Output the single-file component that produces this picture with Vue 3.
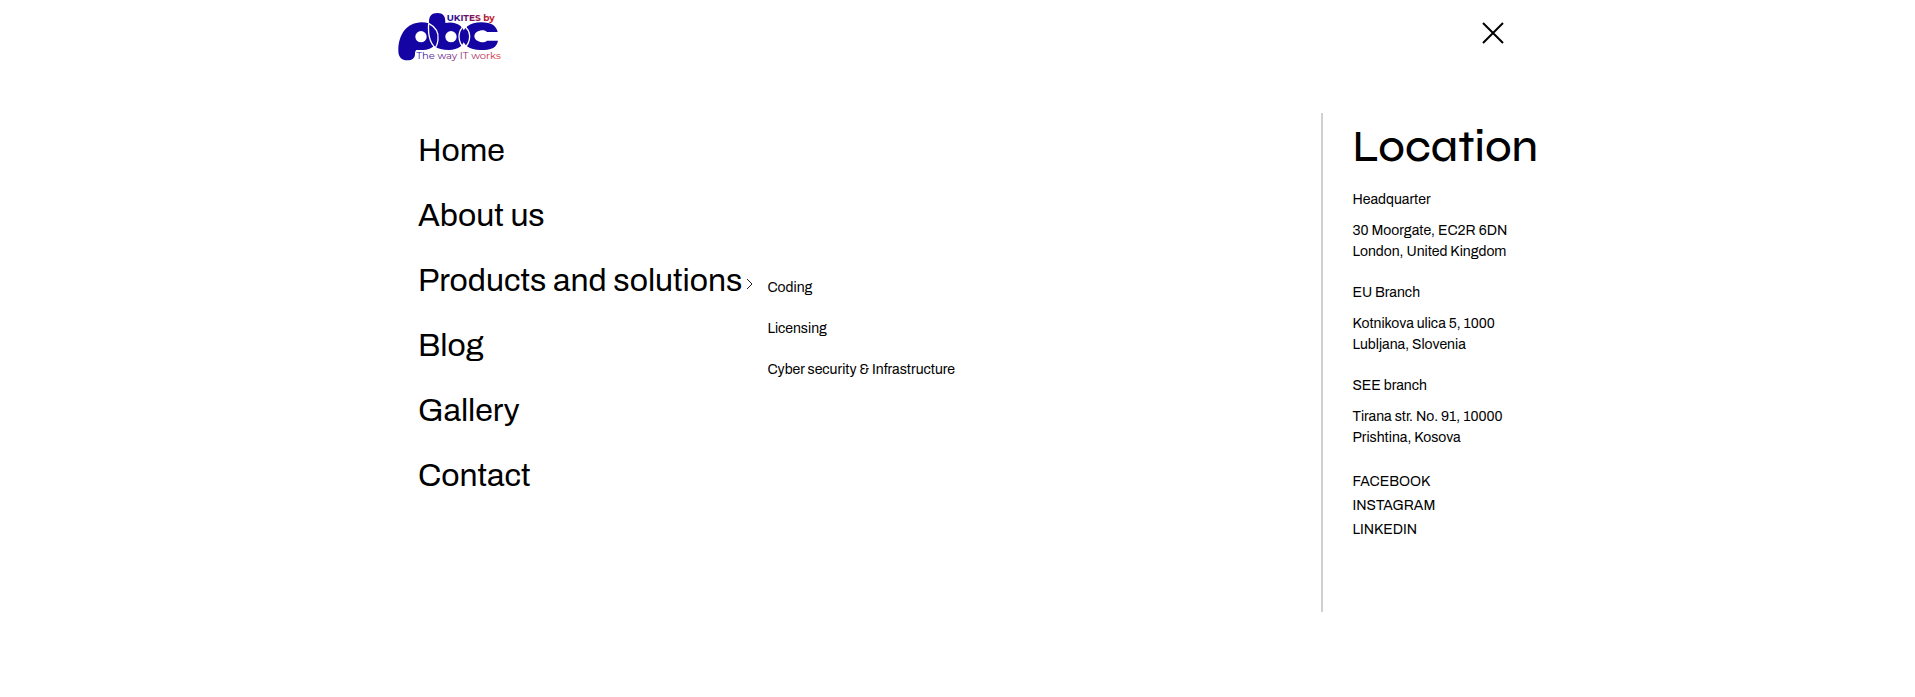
<script setup>
const pages = [
  { label: 'Home' },
  { label: 'About us' },
  {
    label: 'Products and solutions',
    children: ['Coding', 'Licensing', 'Cyber security & Infrastructure'],
  },
  { label: 'Blog' },
  { label: 'Gallery' },
  { label: 'Contact' },
]

const offices = [
  { name: 'Headquarter', lines: ['30 Moorgate, EC2R 6DN', 'London, United Kingdom'] },
  { name: 'EU Branch', lines: ['Kotnikova ulica 5, 1000', 'Lubljana, Slovenia'] },
  { name: 'SEE branch', lines: ['Tirana str. No. 91, 10000', 'Prishtina, Kosova'] },
]

const socials = ['FACEBOOK', 'INSTAGRAM', 'LINKEDIN']
</script>

<template>
  <div class="overlay">
    <header class="bar">
      <a class="logo" href="#" aria-label="UKITES by pbc">
        <svg viewBox="20 36 312 150" width="104" height="50">
          <defs>
            <linearGradient id="ink-top" gradientUnits="userSpaceOnUse" x1="170" y1="0" x2="312" y2="0">
              <stop offset="0" stop-color="#1a0a9c" />
              <stop offset="1" stop-color="#d01c2c" />
            </linearGradient>
            <linearGradient id="ink-bottom" gradientUnits="userSpaceOnUse" x1="78" y1="0" x2="330" y2="0">
              <stop offset="0" stop-color="#2a1aa8" />
              <stop offset="1" stop-color="#e02a34" />
            </linearGradient>
          </defs>
          <g fill="#1404a4">
            <path d="M24 152C24 102 50 68 94 67C125 67 143 84 143 108C143 134 124 150 98 150H78C75 152 74 157 74 162C74 174 65 181 51 181C34 181 24 171 24 152Z" />
            <path d="M116 66C116 48 124 39 141 39C158 39 165 48 165 66V69C195 62 224 78 224 108C224 136 204 150 175 150C140 150 116 136 116 106Z" />
            <path d="M322 96C318 78 304 67 273 67C238 67 216 84 216 109C216 136 238 150 270 150C302 150 319 144 323 122H290C284 127 278 128 270 126C258 123 252 117 252 109C252 101 258 94 268 92C278 90 285 91 290 96Z" />
          </g>
          <g fill="none" stroke="#fff" stroke-width="4">
            <path d="M115 70Q110 132 146 151" />
            <path d="M115 70Q147 87 143 118Q142 137 130 150" />
            <path d="M222 76Q206 90 206 109Q206 132 224 147" />
            <path d="M219 76Q238 89 238 109Q238 132 219 147" />
          </g>
          <circle cx="92" cy="110" r="17" fill="#fff" />
          <circle cx="182" cy="110" r="17" fill="#fff" />
          <text class="logo-top" x="169" y="63" fill="url(#ink-top)">UKITES by</text>
          <text class="logo-bottom" x="78" y="177" fill="url(#ink-bottom)">The way IT works</text>
        </svg>
      </a>
      <button class="close" type="button" aria-label="Close menu">
        <svg viewBox="0 0 22 22" width="22" height="22">
          <path d="M1 1L21 21M21 1L1 21" stroke="#000" stroke-width="2" />
        </svg>
      </button>
    </header>

    <div class="content">
      <nav>
        <ul class="menu">
          <li v-for="page in pages" :key="page.label" class="item">
            <a href="#">{{ page.label }}</a>
            <svg v-if="page.children" class="arrow" viewBox="0 0 8 12" width="8" height="12">
              <path d="M1 1L6 6L1 11" fill="none" stroke="#222" />
            </svg>
            <ul v-if="page.children" class="submenu">
              <li v-for="child in page.children" :key="child"><a href="#">{{ child }}</a></li>
            </ul>
          </li>
        </ul>
      </nav>

      <aside class="location">
        <h2>Location</h2>
        <section v-for="office in offices" :key="office.name" class="office">
          <h3>{{ office.name }}</h3>
          <p v-for="line in office.lines" :key="line">{{ line }}</p>
        </section>
        <ul class="socials">
          <li v-for="social in socials" :key="social"><a href="#">{{ social }}</a></li>
        </ul>
      </aside>
    </div>
  </div>
</template>

<style>
body {
  margin: 0;
  background: #fff;
}
</style>

<style scoped>
.overlay {
  box-sizing: border-box;
  max-width: 1161px;
  margin: 0 auto;
  font: 14px/21px Archivo, "Liberation Sans", Arial, sans-serif;
  color: #000;
}
ul {
  list-style: none;
  margin: 0;
  padding: 0;
}
a {
  color: inherit;
  text-decoration: none;
}
.bar {
  display: flex;
  justify-content: space-between;
  align-items: flex-start;
  padding: 12px 34px 0 20px;
}
.logo svg,
.close svg {
  display: block;
}
.logo-top {
  font: 700 27px Montserrat, Inter, sans-serif;
}
.logo-bottom {
  font: 400 30px Montserrat, Inter, sans-serif;
}
.close {
  margin-top: 10px;
  padding: 0;
  border: 0;
  background: none;
  cursor: pointer;
}
.content {
  display: flex;
  justify-content: space-between;
  margin-top: 51px;
}
.menu {
  padding: 5px 0 0 41px;
}
.item {
  position: relative;
  display: flex;
  align-items: center;
  width: max-content;
  font-size: 32px;
  line-height: 65px;
}
.arrow {
  margin: 7px 0 0 4px;
}
.submenu {
  position: absolute;
  top: 19px;
  left: 100%;
  margin-left: 13px;
  font-size: 14px;
  line-height: 41px;
  white-space: nowrap;
}
.location {
  box-sizing: border-box;
  flex: 0 0 216px;
  padding: 8px 0 70px 29px;
  border-left: 2px solid #d0d0d0;
}
h2 {
  margin: 0 0 16px;
  font: 500 44px/52px Syne, Inter, sans-serif;
  font-feature-settings: "cv11";
}
h3 {
  margin: 0 0 10px;
  font: inherit;
}
p {
  margin: 0;
}
.office {
  margin-bottom: 20px;
}
.socials {
  padding-top: 2px;
  line-height: 24px;
}
</style>
